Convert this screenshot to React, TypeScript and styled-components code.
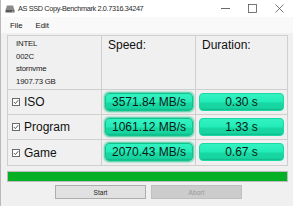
import React from 'react';
import styled, { createGlobalStyle } from 'styled-components';

const GlobalStyle = createGlobalStyle`
  html, body {
    margin: 0;
    padding: 0;
    background: #f0f0f0;
  }
  * { box-sizing: border-box; }
`;

const Window = styled.div`
  width: 293px;
  height: 206px;
  display: flex;
  flex-direction: column;
  background: #f0f0f0;
  border-left: 1px solid #b9b9b9;
  font-family: "Liberation Sans", Arial, sans-serif;
  color: #111;
  overflow: hidden;
`;

const TitleBar = styled.div`
  height: 17px;
  flex: none;
  display: flex;
  align-items: center;
  background: #ffffff;
  padding-left: 4px;
`;

const TitleText = styled.span`
  font-size: 7.3px;
  letter-spacing: -0.35px;
  margin-left: 3px;
  color: #2a2a2a;
  white-space: nowrap;
`;

const WinControls = styled.div`
  margin-left: auto;
  display: flex;
  align-items: center;
  height: 100%;
`;

const WinButton = styled.div`
  width: 27px;
  height: 100%;
  display: flex;
  align-items: center;
  justify-content: center;
`;

const MenuBar = styled.div`
  height: 16px;
  flex: none;
  display: flex;
  align-items: center;
  gap: 13px;
  padding-left: 9px;
  background: #f9f9f9;
  font-size: 7.8px;
`;

const Content = styled.div`
  padding: 2px 7px 0 6px;
  display: flex;
  flex-direction: column;
`;

const Grid = styled.table`
  border-collapse: collapse;
  width: 280px;
  table-layout: fixed;
  td {
    border: 1px solid #cfcfcf;
    padding: 0;
  }
`;

const HeaderRow = styled.tr`
  height: 54px;
`;

const DataRow = styled.tr<{ $h: number }>`
  height: ${({ $h }) => $h}px;
`;

const DriveInfo = styled.td`
  vertical-align: top;
  font-size: 7.8px;
  letter-spacing: -0.2px;
  line-height: 12.5px;
  padding: 2px 0 0 8px !important;
  color: #1a1a1a;
`;

const HeaderCell = styled.td`
  vertical-align: top;
  font-size: 12px;
  padding: 2px 0 0 6px !important;
`;

const LabelCell = styled.td`
  vertical-align: middle;
`;

const Label = styled.div`
  display: flex;
  align-items: center;
  gap: 4px;
  padding-left: 4px;
  font-size: 12px;
`;

const Check = styled.span`
  width: 8px;
  height: 8px;
  border: 1px solid #6b6b6b;
  background: #fff;
  display: inline-flex;
  align-items: center;
  justify-content: center;
`;

const ValueCell = styled.td<{ $left: number; $right: number }>`
  padding: 2px ${({ $right }) => $right}px 3px ${({ $left }) => $left}px !important;
  vertical-align: middle;
`;

const Result = styled.div<{ $glow?: boolean }>`
  height: 18px;
  border-radius: 4px;
  display: flex;
  align-items: center;
  justify-content: center;
  font-size: 12px;
  color: #0e1a15;
  background: linear-gradient(
    to bottom,
    #34f2c2 0%,
    #22ecb8 50%,
    #17d8a2 56%,
    #18d4a0 88%,
    #0fb888 100%
  );
  border: 1px solid ${({ $glow }) => ($glow ? '#10c48e' : '#1ad9a4')};
  box-shadow: ${({ $glow }) =>
    $glow ? '0 0 2px 1px rgba(10, 190, 130, 0.8)' : 'none'};
`;

const Progress = styled.div`
  margin-top: 5px;
  width: 281px;
  height: 11px;
  border: 1px solid #bcbcbc;
  background: #e6e6e6;
`;

const ProgressFill = styled.div`
  height: 100%;
  background: #06b025;
`;

const Buttons = styled.div`
  display: flex;
  gap: 5px;
  margin-top: 3px;
  padding-left: 48px;
`;

const Button = styled.div<{ $disabled?: boolean }>`
  width: 91px;
  height: 14px;
  display: flex;
  align-items: center;
  justify-content: center;
  font-size: 6.6px;
  background: ${({ $disabled }) => ($disabled ? '#cccccc' : '#e1e1e1')};
  border: 1px solid ${({ $disabled }) => ($disabled ? '#bfbfbf' : '#adadad')};
  color: ${({ $disabled }) => ($disabled ? '#9a9a9a' : '#222')};
`;

const rows = [
  { name: 'ISO', speed: '3571.84 MB/s', time: '0.30 s', h: 25 },
  { name: 'Program', speed: '1061.12 MB/s', time: '1.33 s', h: 25 },
  { name: 'Game', speed: '2070.43 MB/s', time: '0.67 s', h: 26 },
];

const DriveIcon = () => (
  <svg width="10" height="8" viewBox="0 0 10 8">
    <path d="M2 0.5 H8 L9.5 5 H0.5 Z" fill="#8a8a8a" />
    <rect x="0.5" y="5" width="9" height="2.5" fill="#5a5a5a" />
    <rect x="7" y="5.8" width="1.5" height="0.9" fill="#cfcfcf" />
  </svg>
);

const CheckMark = () => (
  <svg width="6" height="6" viewBox="0 0 6 6">
    <path d="M0.8 3 L2.4 4.6 L5.2 1.2" fill="none" stroke="#444" strokeWidth="0.9" />
  </svg>
);

export default function App() {
  return (
    <>
      <GlobalStyle />
      <Window>
        <TitleBar>
          <DriveIcon />
          <TitleText>AS SSD Copy-Benchmark 2.0.7316.34247</TitleText>
          <WinControls>
            <WinButton>
              <svg width="9" height="9" viewBox="0 0 9 9">
                <line x1="0" y1="4.5" x2="9" y2="4.5" stroke="#444" strokeWidth="0.8" />
              </svg>
            </WinButton>
            <WinButton>
              <svg width="9" height="9" viewBox="0 0 9 9">
                <rect x="0.5" y="0.5" width="8" height="8" fill="none" stroke="#555" strokeWidth="0.8" />
              </svg>
            </WinButton>
            <WinButton>
              <svg width="9" height="9" viewBox="0 0 9 9">
                <path d="M0.5 0.5 L8.5 8.5 M8.5 0.5 L0.5 8.5" stroke="#555" strokeWidth="0.8" />
              </svg>
            </WinButton>
          </WinControls>
        </TitleBar>
        <MenuBar>
          <span>File</span>
          <span>Edit</span>
        </MenuBar>
        <Content>
          <Grid>
            <colgroup>
              <col style={{ width: 94 }} />
              <col style={{ width: 94 }} />
              <col style={{ width: 92 }} />
            </colgroup>
            <tbody>
              <HeaderRow>
                <DriveInfo>
                  INTEL
                  <br />
                  002C
                  <br />
                  stornvme
                  <br />
                  1907.73 GB
                </DriveInfo>
                <HeaderCell>Speed:</HeaderCell>
                <HeaderCell>Duration:</HeaderCell>
              </HeaderRow>
              {rows.map((r) => (
                <DataRow key={r.name} $h={r.h}>
                  <LabelCell>
                    <Label>
                      <Check>
                        <CheckMark />
                      </Check>
                      {r.name}
                    </Label>
                  </LabelCell>
                  <ValueCell $left={3} $right={2}>
                    <Result $glow>{r.speed}</Result>
                  </ValueCell>
                  <ValueCell $left={3} $right={3}>
                    <Result>{r.time}</Result>
                  </ValueCell>
                </DataRow>
              ))}
            </tbody>
          </Grid>
          <Progress>
            <ProgressFill style={{ width: '100%' }} />
          </Progress>
          <Buttons>
            <Button>Start</Button>
            <Button $disabled>Abort</Button>
          </Buttons>
        </Content>
      </Window>
    </>
  );
}
